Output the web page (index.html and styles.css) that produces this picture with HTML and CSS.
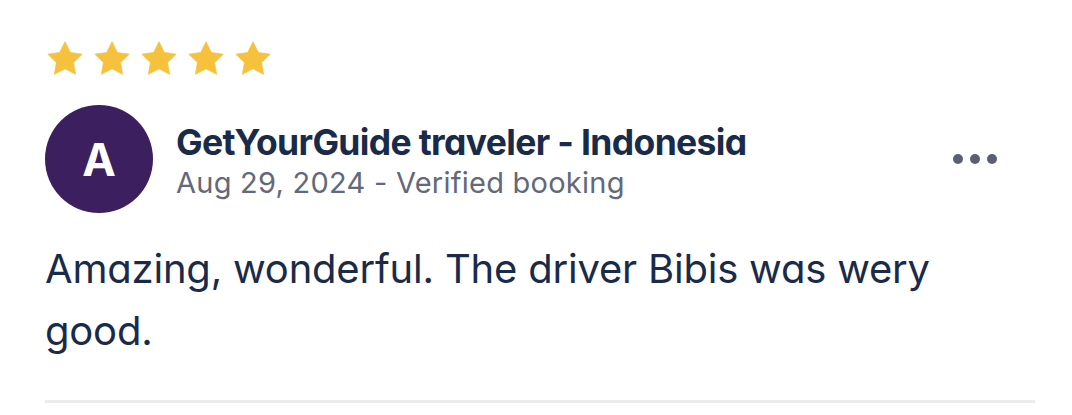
FILE: index.html
```html
<html>
<head>
<meta charset="UTF-8">
<link rel="stylesheet" href="styles.css">
</head>
<body>
<div class="resena">
	<div class="estrellas">
		<svg class="estrella" viewBox="0 0 24 24"><polygon points="12,0.5 15.53,7.65 23.41,8.79 17.71,14.35 19.05,22.21 12,18.5 4.95,22.21 6.29,14.35 0.59,8.79 8.47,7.65"/></svg>
		<svg class="estrella" viewBox="0 0 24 24"><polygon points="12,0.5 15.53,7.65 23.41,8.79 17.71,14.35 19.05,22.21 12,18.5 4.95,22.21 6.29,14.35 0.59,8.79 8.47,7.65"/></svg>
		<svg class="estrella" viewBox="0 0 24 24"><polygon points="12,0.5 15.53,7.65 23.41,8.79 17.71,14.35 19.05,22.21 12,18.5 4.95,22.21 6.29,14.35 0.59,8.79 8.47,7.65"/></svg>
		<svg class="estrella" viewBox="0 0 24 24"><polygon points="12,0.5 15.53,7.65 23.41,8.79 17.71,14.35 19.05,22.21 12,18.5 4.95,22.21 6.29,14.35 0.59,8.79 8.47,7.65"/></svg>
		<svg class="estrella" viewBox="0 0 24 24"><polygon points="12,0.5 15.53,7.65 23.41,8.79 17.71,14.35 19.05,22.21 12,18.5 4.95,22.21 6.29,14.35 0.59,8.79 8.47,7.65"/></svg>
	</div>
	<div class="cabecera">
		<div class="avatar">A</div>
		<div class="autor">
			<div class="nombre">GetYourGuide traveler - Indonesia</div>
			<div class="fecha">Aug 29, 2024 - Verified booking</div>
		</div>
		<div class="mas"><span></span><span></span><span></span></div>
	</div>
	<p class="texto">Amazing, wonderful. The driver Bibis was wery good.</p>
	<div class="linea"></div>
</div>
</body>
</html>
```
FILE: styles.css
```css
body {
	margin: 0;
	background: #ffffff;
	font-family: Inter, "Noto Sans", sans-serif;
	font-feature-settings: "cv11";
	color: #1a2b49;
}
.resena {
	padding: 41px 37px 0 47px;
}
.estrellas {
	display: flex;
	gap: 11px;
}
.estrella {
	display: block;
	width: 36px;
	height: 36px;
	fill: #f6c23d;
	stroke: #f6c23d;
	stroke-width: 0.5;
	stroke-linejoin: round;
}
.cabecera {
	display: flex;
	align-items: center;
	margin-top: 28px;
	margin-left: -2px;
}
.avatar {
	width: 108px;
	height: 108px;
	border-radius: 50%;
	background-color: #3c1f5e;
	color: #ffffff;
	font-weight: 700;
	font-size: 45px;
	display: flex;
	align-items: center;
	justify-content: center;
	flex-shrink: 0;
}
.autor {
	flex: 1;
	margin-left: 23px;
	padding-top: 4px;
}
.nombre {
	font-size: 35.5px;
	line-height: 43px;
	font-weight: 700;
	letter-spacing: -0.65px;
}
.fecha {
	font-size: 29px;
	line-height: 37px;
	letter-spacing: 0.25px;
	color: #63687a;
}
.mas {
	display: flex;
	gap: 7px;
	margin-right: 38px;
}
.mas span {
	width: 10px;
	height: 10px;
	border-radius: 50%;
	background-color: #5b5f73;
}
.texto {
	margin: 25px 0 0 -2px;
	font-size: 40px;
	line-height: 62px;
	letter-spacing: -0.2px;
	width: 900px;
}
.linea {
	margin: 38px 0 0 -2px;
	height: 3px;
	background-color: #ececee;
}
```
